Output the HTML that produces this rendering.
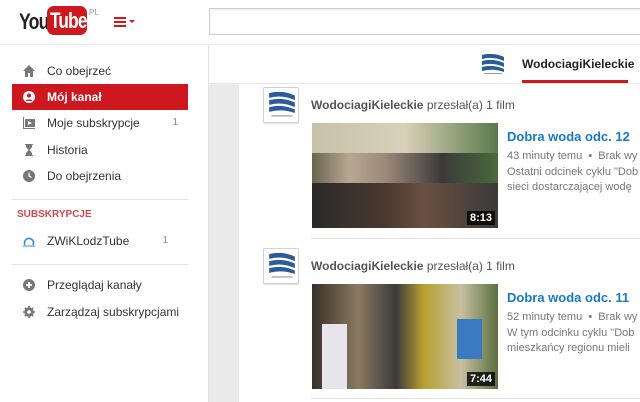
<!DOCTYPE html>
<html><head><meta charset="utf-8"><style>
*{margin:0;padding:0;box-sizing:border-box}
body{width:640px;height:402px;overflow:hidden;background:#fff;font-family:"Liberation Sans",Arial,sans-serif;position:relative;font-size:12px;color:#333}
.a{position:absolute}
.nav{position:absolute;left:12px;width:176px;height:26px;line-height:26px;padding-left:35px;font-size:12px;color:#333}
.nav .ic{position:absolute;left:11px;top:7px;width:12px;height:12px}
.cnt{position:absolute;right:10px;color:#888;font-size:10px}
.logo{position:absolute;width:36px;height:36px;border:1px solid #d3d3d3;background:#fff;border-radius:2px;box-shadow:0 1px 1px #ddd}
.logo svg{position:absolute;left:5px;top:4px}
.t{font-weight:bold;color:#167ac6;font-size:13px}
.m{color:#777;font-size:11px}
.d{color:#777;font-size:11px;line-height:15px}
.dur{position:absolute;right:3px;bottom:3px;background:rgba(0,0,0,.8);color:#fff;font-weight:bold;font-size:11px;padding:1px 3px}
</style></head><body>
<!-- header -->
<div class="a" style="left:0;top:0;width:640px;height:45px;border-bottom:1px solid #e8e8e8"></div>
<div class="a" style="left:19px;top:9px;font-weight:bold;font-size:22px;letter-spacing:-1px;color:#222;transform:scaleX(.8);transform-origin:left">You</div>
<div class="a" style="left:47px;top:6px;width:40px;height:29px;background:#cc181e;border-radius:7px;overflow:hidden"><span class="a" style="left:3px;top:1px;color:#fff;font-weight:bold;font-size:22px;line-height:28px;letter-spacing:-1px;transform:scaleX(.78);transform-origin:left;white-space:nowrap">Tube</span></div>
<div class="a" style="left:89px;top:8px;font-size:8px;color:#999">PL</div>
<div class="a" style="left:114px;top:17px;width:12px;height:2px;background:#cc181e;box-shadow:0 4px 0 #cc181e,0 8px 0 #cc181e"></div>
<div class="a" style="left:129px;top:20px;border:3px solid transparent;border-top:3px solid #cc181e"></div>
<div class="a" style="left:209px;top:8px;width:440px;height:27px;border:1px solid #ccc;box-shadow:inset 0 1px 2px #eee"></div>
<!-- sidebar -->
<div class="a" style="left:208px;top:45px;width:1px;height:357px;background:#e2e2e2"></div>
<div class="nav" style="top:58px"><svg class="ic" viewBox="0 0 12 12"><path d="M6 0L0 6h2v6h3V8h2v4h3V6h2z" fill="#777"/></svg>Co obejrzeć</div>
<div class="nav" style="top:84px;background:#cc181e;color:#fff;font-weight:bold"><svg class="ic" viewBox="0 0 12 12"><circle cx="6" cy="6" r="6" fill="#fff"/><circle cx="6" cy="4.5" r="2" fill="#cc181e"/><path d="M2.5 10c1-2 6-2 7 0" fill="#cc181e"/></svg>Mój kanał</div>
<div class="nav" style="top:110px"><svg class="ic" viewBox="0 0 12 12"><path d="M0 0h1v11h11v1H0z" fill="#777"/><rect x="2" y="2" width="10" height="8" fill="#777"/><path d="M5 4l4 2-4 2z" fill="#fff"/></svg>Moje subskrypcje<span class="cnt">1</span></div>
<div class="nav" style="top:137px"><svg class="ic" viewBox="0 0 12 12"><path d="M2 0h8v1H9v2L6.5 6 9 9v2h1v1H2v-1h1V9l2.5-3L3 3V1H2z" fill="#777"/></svg>Historia</div>
<div class="nav" style="top:163px"><svg class="ic" viewBox="0 0 12 12"><circle cx="6" cy="6" r="6" fill="#777"/><path d="M6 2.5V6l2.5 1.5" stroke="#fff" fill="none" stroke-width="1.2"/></svg>Do obejrzenia</div>
<div class="a" style="left:12px;top:199px;width:176px;height:1px;background:#e2e2e2"></div>
<div class="a" style="left:17px;top:209px;font-size:10px;font-weight:bold;color:#cc181e;opacity:.8">SUBSKRYPCJE</div>
<div class="nav" style="top:228px"><svg class="ic" viewBox="0 0 12 12"><path d="M2 10A4.5 4.5 0 1 1 10 10" stroke="#3a8fc6" stroke-width="1.6" fill="none"/><path d="M0 11h12" stroke="#3a8fc6"/></svg>ZWiKLodzTube<span class="cnt" style="right:20px">1</span></div>
<div class="a" style="left:12px;top:264px;width:176px;height:1px;background:#e2e2e2"></div>
<div class="nav" style="top:272px"><svg class="ic" viewBox="0 0 12 12"><circle cx="6" cy="6" r="6" fill="#777"/><path d="M6 3v6M3 6h6" stroke="#fff" stroke-width="1.8"/></svg>Przeglądaj kanały</div>
<div class="nav" style="top:299px"><svg class="ic" viewBox="0 0 12 12"><circle cx="6" cy="6" r="3.5" fill="none" stroke="#777" stroke-width="2.5"/><path d="M6 0v12M0 6h12M1.8 1.8l8.4 8.4M10.2 1.8l-8.4 8.4" stroke="#777" stroke-width="1.6"/><circle cx="6" cy="6" r="1.8" fill="#fff"/></svg>Zarządzaj subskrypcjami</div>
<!-- main -->
<div class="a" style="left:209px;top:84px;width:30px;height:318px;background:#eaeaea"></div>
<div class="a" style="left:209px;top:83px;width:431px;height:1px;background:#e8e8e8"></div>
<svg class="a" style="left:482px;top:54px" width="22" height="22" viewBox="0 0 22 22"><path d="M0 1q11-3 22 2v4Q11 2 0 5zM0 7q11-3 22 2v4Q11 8 0 11zM0 13q11-3 22 2v3Q11 14 0 17z" fill="#2a5b9a"/><rect x="2" y="19" width="18" height="1" fill="#999"/></svg>
<div class="a" style="left:522px;top:57px;font-weight:bold;font-size:12px;color:#222">WodociagiKieleckie</div>
<div class="a" style="left:522px;top:80px;width:106px;height:3px;background:#cc181e"></div>

<div class="logo" style="left:263px;top:87px"><svg width="26" height="28" viewBox="0 0 22 24"><path d="M0 1q11-3 22 2v4Q11 2 0 5zM0 7q11-3 22 2v4Q11 8 0 11zM0 13q11-3 22 2v3Q11 14 0 17z" fill="#2a5b9a"/><rect x="2" y="20" width="18" height="1" fill="#999"/></svg></div>
<div class="a" style="left:311px;top:98px;font-size:12px;color:#555"><b style="color:#555">WodociagiKieleckie</b> przesłał(a) 1 film</div>
<div class="a" style="left:312px;top:123px;width:186px;height:105px;background:linear-gradient(90deg,#6a6450 0%,#b8a890 20%,#9a8878 40%,#3a3a3a 70%,#4a6a3a 100%)">
<div class="a" style="left:0;top:0;width:186px;height:30px;background:linear-gradient(90deg,#c8c0a8,#d8d0b8 50%,#5a7a4a)"></div>
<div class="a" style="left:0;top:60px;width:186px;height:45px;background:linear-gradient(90deg,#2a2a2a 0%,#4a3a30 40%,#6a5040 60%,#3a3a3a)"></div>
<span class="dur">8:13</span></div>
<div class="a t" style="left:507px;top:129px">Dobra woda odc. 12</div>
<div class="a m" style="left:507px;top:150px;white-space:nowrap">43 minuty temu &nbsp;•&nbsp; Brak wy</div>
<div class="a d" style="left:507px;top:165px;white-space:nowrap">Ostatni odcinek cyklu "Dob<br>sieci dostarczającej wodę</div>
<div class="a" style="left:311px;top:238px;width:329px;height:1px;background:#e5e5e5"></div>

<div class="logo" style="left:263px;top:248px"><svg width="26" height="28" viewBox="0 0 22 24"><path d="M0 1q11-3 22 2v4Q11 2 0 5zM0 7q11-3 22 2v4Q11 8 0 11zM0 13q11-3 22 2v3Q11 14 0 17z" fill="#2a5b9a"/><rect x="2" y="20" width="18" height="1" fill="#999"/></svg></div>
<div class="a" style="left:311px;top:259px;font-size:12px;color:#555"><b>WodociagiKieleckie</b> przesłał(a) 1 film</div>
<div class="a" style="left:312px;top:284px;width:186px;height:105px;background:linear-gradient(90deg,#3a3028 0%,#8a7a60 25%,#3a3a3a 45%,#b8a030 60%,#c8c0a0 80%,#5a7040 100%)">
<div class="a" style="left:10px;top:40px;width:25px;height:65px;background:#e8e4ec"></div>
<div class="a" style="left:145px;top:35px;width:25px;height:40px;background:#3a7ac0"></div>
<span class="dur">7:44</span></div>
<div class="a t" style="left:507px;top:290px">Dobra woda odc. 11</div>
<div class="a m" style="left:507px;top:311px;white-space:nowrap">52 minuty temu &nbsp;•&nbsp; Brak wy</div>
<div class="a d" style="left:507px;top:326px;white-space:nowrap">W tym odcinku cyklu "Dob<br>mieszkańcy regionu mieli</div>
<div class="a" style="left:311px;top:398px;width:329px;height:1px;background:#e5e5e5"></div>
</body></html>
